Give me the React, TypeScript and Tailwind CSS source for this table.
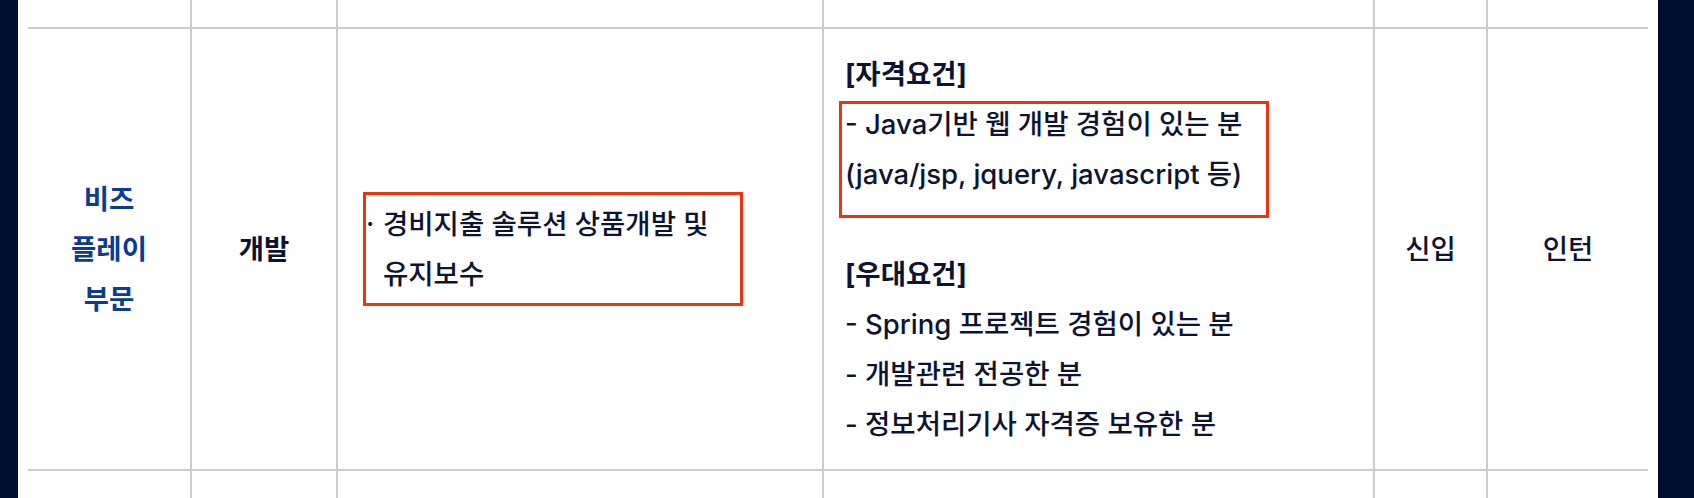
import React from 'react';

const cols = 'grid grid-cols-[162px_146px_486px_551px_113px_162px]';
const cellLine = 'border-l-2 border-[#cccccc]';

const EmptyRow: React.FC<{ className?: string }> = ({ className = '' }) => (
  <div className={`${cols} ${className}`}>
    <div />
    <div className={cellLine} />
    <div className={cellLine} />
    <div className={cellLine} />
    <div className={cellLine} />
    <div className={cellLine} />
  </div>
);

const App: React.FC = () => {
  return (
    <div
      className="w-[1694px] h-[498px] flex bg-white text-[#0d1431] overflow-hidden"
      style={{ fontFamily: '"Inter", "Noto Sans CJK KR", sans-serif' }}
    >
      <div className="w-[18px] bg-[#000d2e]" />
      <div className="w-[10px]" />

      {/* Table */}
      <div className="w-[1620px] flex flex-col text-[27.5px] leading-[50px] font-medium">
        <EmptyRow className="h-[27px] shrink-0" />

        <div className={`${cols} h-[444px] shrink-0 border-y-2 border-[#cccccc]`}>
          <div className="flex flex-col items-center justify-center font-bold text-[#0a3d91]">
            <span>비즈</span>
            <span>플레이</span>
            <span>부문</span>
          </div>

          <div className={`${cellLine} flex items-center justify-center font-bold`}>개발</div>

          <div className={`${cellLine} relative flex items-center pl-[28px]`}>
            <div className="flex">
              <span className="w-[17px]">·</span>
              <span>
                경비지출 솔루션 상품개발 및
                <br />
                유지보수
              </span>
            </div>
            <div className="absolute left-[25px] top-[163px] w-[380px] h-[114px] border-[3px] border-[#ee3311]" />
          </div>

          <div className={`${cellLine} relative flex flex-col justify-center pl-[21px]`}>
            <p className="font-bold">[자격요건]</p>
            <p>- Java기반 웹 개발 경험이 있는 분</p>
            <p>(java/jsp, jquery, javascript 등)</p>
            <p>&nbsp;</p>
            <p className="font-bold">[우대요건]</p>
            <p>- Spring 프로젝트 경험이 있는 분</p>
            <p>- 개발관련 전공한 분</p>
            <p>- 정보처리기사 자격증 보유한 분</p>
            <div className="absolute left-[15px] top-[72px] w-[430px] h-[117px] border-[3px] border-[#ee3311]" />
          </div>

          <div className={`${cellLine} flex items-center justify-center`}>신입</div>
          <div className={`${cellLine} flex items-center justify-center`}>인턴</div>
        </div>

        <EmptyRow className="flex-1" />
      </div>

      <div className="w-[10px]" />
      <div className="flex-1 bg-[#000d2e]" />
    </div>
  );
};

export default App;
